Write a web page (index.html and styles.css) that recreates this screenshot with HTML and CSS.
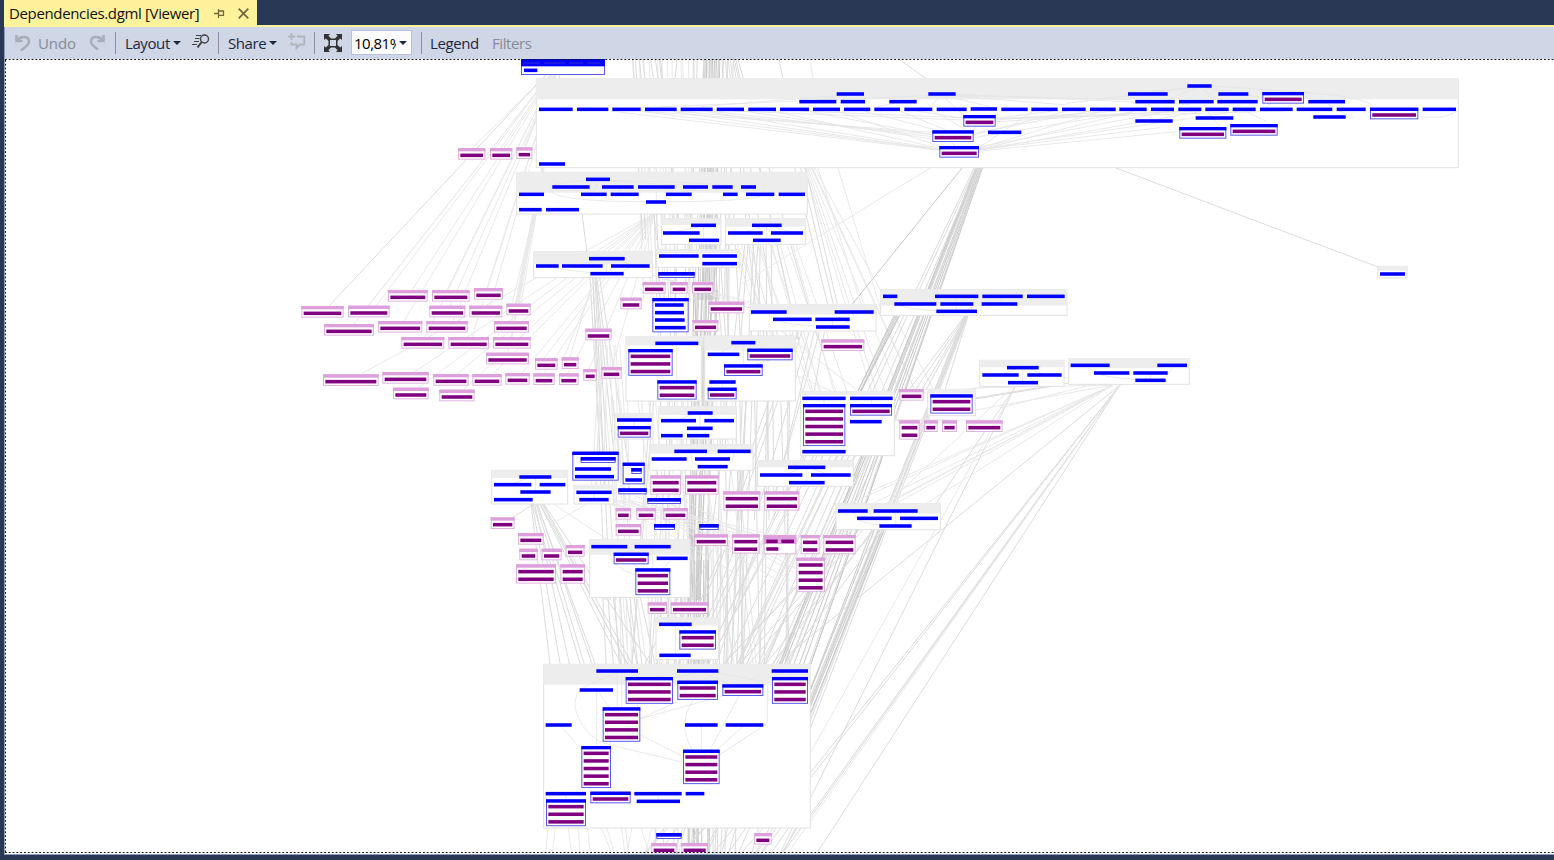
FILE: index.html
```html
<!DOCTYPE html>
<html lang="en">
<head>
<meta charset="utf-8">
<title>Dependencies.dgml [Viewer]</title>
<link rel="stylesheet" href="styles.css">
</head>
<body>
<div class="window">
  <header class="tabs">
    <div class="tab">
      <span class="tab-title">Dependencies.dgml [Viewer]</span>
      <svg class="pin" width="11" height="9" viewBox="0 0 11 9"><path d="M0 4.5H4M4.5 0V9M5 2H9.5V6M5 6.3H10" fill="none" stroke="#75633d" stroke-width="1.3"/></svg>
      <svg class="close" width="11" height="11" viewBox="0 0 11 11"><path d="M.7.7L10.3 10.3M10.3.7L.7 10.3" stroke="#75633d" stroke-width="1.7"/></svg>
    </div>
  </header>
  <nav class="toolbar">
    <svg class="i-undo" width="16" height="18" viewBox="0 0 16 18"><path d="M1.5 1V7H7.5M2 6.5C6 1.5 14 2 14 7.5C14 11 10 13 6 16.5" fill="none" stroke="#a9adb8" stroke-width="2.6"/></svg>
    <span class="t-undo off">Undo</span>
    <svg class="i-redo" width="16" height="18" viewBox="0 0 16 18"><path d="M14.5 1V7H8.5M14 6.5C10 1.5 2 2 2 7.5C2 11 6 13 9 15.5" fill="none" stroke="#a9adb8" stroke-width="2.6"/></svg>
    <i class="sep s1"></i>
    <span class="t-layout">Layout</span><i class="caret"></i>
    <svg class="i-find" width="18" height="15" viewBox="0 0 18 15"><circle cx="12.5" cy="5" r="4" fill="none" stroke="#424242" stroke-width="1.4"/><path d="M9.7 8L5.5 13.5" stroke="#424242" stroke-width="2"/><path d="M4 1.5H9M3 4.5H7.5M2 7.5H7M0 10.5H5" stroke="#424242" stroke-width="1.2"/></svg>
    <i class="sep s2"></i>
    <span class="t-share">Share</span><i class="caret"></i>
    <svg class="i-comment" width="18" height="17" viewBox="0 0 18 17"><path d="M3.5 0V7M0 3.5H7M9 3.5H16.3V11.5H12L8.5 15V11.5H3.5V9" fill="none" stroke="#b1b5c0" stroke-width="1.8"/></svg>
    <i class="sep s3"></i>
    <svg class="i-fit" width="18" height="18" viewBox="0 0 18 18"><path d="M0 0H6L4.4 1.8L7 4.5H11L13.6 1.8L12 0H18V6L16.2 4.4L13.5 7V11L16.2 13.6L18 12V18H12L13.6 16.2L11 13.5H7L4.4 16.2L6 18H0V12L1.8 13.6L4.5 11V7L1.8 4.4L0 6Z" fill="#333"/><rect x="6" y="6" width="6" height="6" fill="#cfd6e5"/></svg>
    <div class="zoom"><span class="zoom-text">10,81%</span><i class="caret"></i></div>
    <i class="sep s4"></i>
    <span class="t-legend">Legend</span>
    <span class="t-filters off">Filters</span>
  </nav>
  <main class="canvas"><svg id="graph" class="graph" width="1549" height="795" viewBox="5 59 1549 795"></svg></main>
</div>
<script src="graph.js"></script>
</body>
</html>
```
FILE: styles.css
```css
* { box-sizing: border-box; }
body { margin: 0; font: 15px/20px "Open Sans", "Noto Sans", sans-serif; color: #1b293e; }
.window { width: 1554px; height: 860px; display: flex; flex-direction: column; background: #293955; padding: 0 0 5px 4px; overflow: hidden; }
.tabs { height: 27px; flex: none; border-bottom: 2px solid #fff29d; }
.tab { width: 253px; height: 27px; background: #fff29d; display: flex; align-items: center; padding: 0 0 1px 5px; color: #111; }
.tab-title { width: 190px; flex: none; white-space: nowrap; font-size: 15px; letter-spacing: -.35px; }
.pin { margin-left: 15px; }
.close { margin-left: 13px; }
.toolbar { height: 32px; flex: none; display: flex; align-items: center; background: #cfd6e5; border-left: 1px solid #8e9bbc; padding-bottom: 1px; white-space: nowrap; }
.toolbar > * { flex: none; }
.off { color: #858b97; }
.i-undo { margin-left: 10px; }
.t-undo { width: 37px; margin-left: 7px; letter-spacing: -.1px; }
.i-redo { margin-left: 14px; }
.sep { width: 1px; height: 22px; background: #8591a2; }
.s1 { margin-left: 10px; }
.t-layout { width: 45px; margin-left: 9px; letter-spacing: -.4px; }
.caret { border: 4px solid transparent; border-top-color: #1b293e; border-bottom: 0; margin-left: 3px; }
.i-find { margin-left: 11px; margin-bottom: 2px; }
.s2 { margin-left: 8px; }
.t-share { width: 38px; margin-left: 9px; letter-spacing: -.4px; }
.i-comment { margin-left: 11px; margin-bottom: 2px; }
.s3 { margin-left: 8px; }
.i-fit { margin-left: 9px; }
.zoom { width: 61px; height: 25px; margin-left: 9px; display: flex; align-items: center; background: #fcfcfc; border: 1px solid #b9c2d8; padding-left: 2px; color: #000; }
.zoom-text { width: 42px; overflow: hidden; letter-spacing: -.5px; }
.s4 { margin-left: 9px; }
.t-legend { width: 49px; margin-left: 8px; letter-spacing: -.4px; }
.t-filters { margin-left: 13px; letter-spacing: -.4px; }
.canvas { flex: 1; min-height: 0; border-left: 1px solid #8e9bbc; border-bottom: 1px solid #8e9bbc; background: #fff; display: flex; }
.graph { display: block; flex: none; }
.group { fill: #fff; stroke: #e1e1e1; stroke-width: 3; }
.group-head { fill: #ededed; }
.edge { fill: none; stroke: #dcdcdc; stroke-width: 1; }
.edge.light { stroke: #e9e9e9; }
.edge.dark { stroke: #c8c8c8; }
.inner { fill: none; stroke: #e5e5e5; stroke-width: 2.5; }
.bar { fill: #00f; }
.bar.method { fill: #800080; }
.blue-box { fill: #fff; stroke: #5a5aea; stroke-width: 3; }
.pink-box { fill: #fff; stroke: #dfb5e0; stroke-width: 3; }
.blue-head { fill: #00f; }
.pink-head { fill: #dda0dd; }
.cell { fill: none; stroke: #1818e0; stroke-width: 8; }
.focus { fill: none; stroke: #111; stroke-width: 1; stroke-dasharray: 1.8 2; }
```
FILE: graph.js
```js
// Node coordinates are in thirds of a pixel, local to the origin of their sector.
// groups: x1 y1 x2 y2 headerBottom | bars: x1 x2 y | boxes: x1 x2 y rows | slots: x1 x2 y
const sectors = [
  { at: [500, 55],
    groups: [[108,70,2876,339,133],[49,351,923,478,413],[483,490,664,569,510],[676,490,917,569,515]],
    inner: ["M1325 120L1130 155M1325 120L1390 180M1325 120L1290 155M1325 120L1470 155M1325 120L1700 150M1050 120L950 136M1010 122L600 155M1285 122L420 158M1325 235L1365 273M1440 190L1420 226",
      "M420 168L1300 232M530 168L1297 238M630 168L1297 245M730 168L1297 252M820 168L1320 280M920 168L1297 240M1010 168L1320 275M430 170L1320 284M330 168L1320 286M700 168L1390 195M900 168L1390 188M1200 168L1340 226M1090 168L1320 228M1250 168L1390 190M1300 168L1400 226M620 170L1318 282M520 170L1318 284",
      "M1437 280L1800 170M1437 284L1900 170M1437 276L2000 170M1437 286L2100 170M1437 284L1980 218M1437 288L2030 230M1437 282L2220 168M1421 240L1700 168M1421 248L1900 170M1487 195L1850 168M1487 200L2040 168M1487 192L2350 168M1487 190L1660 168M1487 190L2200 165M1421 235L1770 168M1437 278L1600 168M1367 118L2070 148M1700 145L2062 100M1367 122L1890 134",
      "M2098 95L2000 136M2098 95L2150 136M2098 95L1900 115M2098 95L2300 130M2135 93L2420 112M2410 112Q2600 125 2620 155M2350 120L2300 155M2230 165L2300 200M2120 165L2160 215M2480 145L2560 190M2760 185Q2850 195 2880 160",
      "M258 376Q130 385 150 408Q180 440 438 440M330 378L560 392M294 380L280 412M330 376Q780 385 780 414M500 440Q700 440 780 425M469 405L469 435M220 402L240 412M360 402L360 412M590 402L540 412M610 516V550M595 518L520 530M800 516V550M780 518L735 530M830 518L870 530"],
    bars: [[1010,1092,117],[1285,1367,117],[898,1009,140],[1022,1095,140],[1168,1250,140],[117,218,163],[231,325,163],[337,422,163],[435,530,163],[542,638,163],[650,732,163],[745,828,163],[840,927,163],[939,1020,163],[1032,1111,163],[1123,1200,163],[1213,1297,163],[1310,1400,163],[1412,1491,162],[117,195,327],[1464,1564,232],
      [258,330,373],[157,269,396],[306,401,396],[414,524,396],[549,624,396],[637,698,396],[723,768,396],[57,132,418],[243,320,418],[332,416,418],[498,575,418],[669,713,418],[738,823,418],[836,915,418],[438,498,441],[57,125,464],[138,237,464],[573,648,511],[489,599,534],[567,657,556],[756,845,511],[684,788,534],[813,909,534],[759,842,556]],
    blue: [[1390,1487,180,1],[1297,1421,226,1],[1318,1437,273,1]],
    pink: [[49,97,277,1],[-30,37,279,1],[-126,-44,279,1]] },
  { at: [980, 60],
    groups: [[1192,618,1282,655,632]],
    bars: [[622,695,78],[444,563,102],[715,805,102],[466,584,125],[597,701,125],[712,833,125],[985,1095,125],[64,143,148],[154,233,148],[246,317,148],[330,407,148],[418,500,148],[513,582,148],[595,664,148],[676,746,148],[758,827,148],[840,938,148],[950,1057,148],[1070,1157,148],[1328,1428,148],[466,578,183],[647,760,174],[1000,1097,171],[1200,1275,642]],
    blue: [[847,972,96,1],[598,739,201,1],[751,893,192,1],[1170,1315,143,1]] },
  { at: [290, 240],
    pink: [[294,413,150,1],[426,539,150,1],[552,639,144,1],[34,161,198,1],[174,299,197,1],[418,526,197,1],[538,637,197,1],[649,722,191,1],[102,252,252,1],[264,397,243,1],[409,533,243,1],[612,717,243,1],[334,463,291,1],[475,597,291,1],[609,722,291,1],[588,717,338,1],[99,266,403,1],[277,416,396,1],[430,536,402,1],[547,635,402,1],[646,719,399,1],[309,416,443,1],[448,554,449,1]] },
  { at: [520, 210],
    groups: [[40,124,398,204,163],[409,118,659,173,130],[317,379,545,574,407],[553,377,827,574,422]],
    inner: ["M260 150V190M240 150L180 165M290 150L340 165M80 172L210 188M330 172L300 188M470 405V511M640 403L600 430M690 403L740 416M670 403V463M750 450L700 465M607 520V533"],
    bars: [[207,314,146],[48,116,168],[126,248,168],[273,389,168],[211,311,191],[417,536,138],[547,651,138],[547,651,161],[406,535,400],[634,706,398],[563,658,433],[568,647,516]],
    blue: [[325,458,417,3],[412,530,511,2],[682,818,416,1],[612,728,463,1],[563,650,533,1]],
    shells: [[397,506,264,103]], shellBars: [[405,491,285],[405,492,308],[405,494,330],[405,497,353]],
    slots: [[415,524,186]],
    pink: [[368,437,216,1],[451,503,216,1],[516,580,216,1],[301,365,263,1],[565,673,275,1],[518,595,330,1],[196,275,356,1],[45,113,444,1],[125,176,442,1],[40,104,490,1],[117,176,490,1],[190,231,477,1],[244,305,471,1]] },
  { at: [740, 280],
    groups: [[27,73,409,154,104],[421,28,982,107,77],[718,240,973,320,262],[985,235,1349,314,265],[181,334,464,528,345],[562,327,707,408,340]],
    inner: ["M88 100Q85 130 228 138M342 100Q345 118 300 138M277 122V138M450 52Q450 85 589 92M649 52V90M710 76L680 90M781 52V68M848 268V305M830 267L790 282M870 267L910 282M1052 260Q1050 290 1186 298M1297 260Q1290 285 1260 298M1231 282V298M252 358V372M394 358V372"],
    bars: [[33,140,96],[284,401,96],[99,215,118],[226,329,118],[228,329,141],[429,472,49],[585,715,49],[727,848,49],[861,974,49],[463,589,72],[601,700,72],[725,832,72],[589,711,94],[801,896,263],[727,836,285],[862,965,285],[804,894,308],[992,1109,256],[1252,1341,256],[1062,1168,279],[1180,1283,279],[1186,1277,301],[187,317,355],[330,458,355],[330,425,425],[187,317,515]],
    blue: [[189,316,372,5],[330,456,372,1],[571,698,343,2]],
    pink: [[244,373,178,1],[478,551,327,1],[478,539,421,2],[552,593,421,1],[606,651,421,1],[678,788,421,1]] },
  { at: [480, 400],
    groups: [[404,40,520,118,56],[535,19,770,118,45],[508,133,820,212,161],[34,210,264,313,234],[281,255,402,313,268],[328,418,631,593,464]],
    inner: ["M463 64V78M660 42V82M640 42L600 58M680 42L715 58M633 158Q630 190 655 197M763 158Q760 190 740 197M166 234V272M145 234L100 250M342 280V296M388 445Q390 500 466 525M454 490L480 505M575 478L550 505M518 444V505"],
    bars: [[411,515,60],[623,698,39],[543,648,62],[673,762,62],[621,698,85],[543,608,107],[621,688,107],[583,681,154],[713,812,154],[515,620,177],[645,750,177],[653,743,200],[118,214,231],[42,154,254],[179,256,254],[121,212,276],[42,158,299],[289,395,277],[298,386,299],[334,442,440],[464,572,440],[530,623,475]],
    blue: [[413,512,78,1],[401,506,458,1],[466,571,505,3]],
    shells: [[277,416,155,87],[428,494,188,65]], shellBars: [[285,393,207],[285,402,230],[436,486,240]],
    slots: [[302,407,171],[454,485,204],[415,500,265],[502,603,294],[522,585,372],[658,716,372]],
    pink: [[511,603,226,2],[615,716,226,2],[730,841,274,2],[407,453,324,1],[469,527,324,1],[550,623,324,1],[407,483,372,1],[32,104,352,1],[114,191,399,1],[118,173,446,1],[185,245,446,1],[257,314,435,1],[108,228,493,2],[241,315,493,2],[643,744,403,1],[756,839,403,2]] },
  { at: [740, 450],
    groups: [[52,31,341,110,52],[287,160,602,240,191]],
    inner: ["M200 56V95M180 56L140 72M220 56L260 72M340 186Q345 220 418 225M466 186V224M530 208L500 224"],
    bars: [[144,256,52],[60,187,75],[213,332,75],[147,254,98],[294,383,183],[401,533,183],[351,455,205],[480,594,205],[418,515,228]],
    pink: [[73,178,124,2],[71,169,255,-2],[182,239,255,2],[250,347,255,2],[169,255,323,4]],
    methods: [[79,113,274],[124,162,274],[79,115,297]] },
  { at: [530, 590],
    groups: [[377,82,566,209,106],[40,222,842,715,284]],
    inner: ["M436 107V192M450 107L470 121M262 247L180 282Q120 310 140 370Q170 450 240 465L460 517M262 247V350M275 247V350M200 303V468M205 305L237 352M92 408L155 480M500 247L440 263M520 247L600 283M440 250L370 262M490 330Q440 400 487 480M627 318L540 480M640 408L560 480M514 408V480M712 285V400L570 494M560 250Q710 270 712 290M332 385L442 335M332 386L577 318M332 435L460 500M240 455V468M320 342L325 352M780 247V261M108 615V628M385 615V630"],
    bars: [[387,485,103],[388,482,196],[199,324,243],[441,565,243],[725,834,243],[149,249,300],[47,125,405],[465,563,405],[587,700,405],[47,168,611],[313,455,611],[467,523,611],[320,450,634]],
    blue: [[448,558,121,2],[287,429,261,3],[442,564,272,2],[577,700,283,1],[726,834,261,3],[218,331,352,4],[154,243,468,5],[459,569,479,4],[48,168,628,3],[181,302,605,1]],
    slots: [[379,455,729]],
    pink: [[353,411,37,1],[422,535,37,1],[672,725,729,1],[364,440,759,1],[454,534,759,1]] },
];

let edges = "";
const line = (x1, y1, x2, y2, tone = "") => { edges += `<path class="edge ${tone}" d="M${x1} ${y1}L${x2} ${y2}"/>`; };
const fan = (x, y, targets, tone) => targets.forEach(([tx, ty]) => line(x, y, tx, ty, tone));
let seed = 7;
const rnd = () => (seed = (seed * 16807) % 2147483647) / 2147483647;
// A bundle of n roughly parallel links between two horizontal spans.
const bundle = (n, a1, a2, ya, b1, b2, yb, tone) => {
  for (let i = 0; i < n; i++) {
    const t = (i + rnd()) / n, u = Math.min(1, Math.max(0, t + (rnd() - .5) * .25));
    line((a1 + (a2 - a1) * t).toFixed(1), ya, (b1 + (b2 - b1) * u).toFixed(1), yb, tone);
  }
};

fan(560, 62, [[354,324],[368,306],[376,306],[404,321],[412,290],[447,290],[425,337],[450,306],[453,321],[487,288],[490,306],[472,337],[472,148],[501,148],[525,148]], "light");
line(558, 62, 329, 306);
fan(562, 62, [[519,304],[521,304],[512,321],[512,337],[508,353],[516,304],[524,145]], "light");
fan(655, 213, [[361,374],[414,372],[457,374],[418,388],[463,390],[493,374],[522,373],[544,358],[544,373],[568,373],[589,369],[612,367]], "light");
bundle(5, 590, 600, 277, 598, 632, 480); bundle(3, 592, 597, 277, 600, 619, 600);
line(582, 214, 587, 252); line(597, 277, 564, 357, "light"); line(594, 277, 570, 357, "light");
line(536, 214, 516, 304, "light"); line(534, 214, 512, 304, "light");
bundle(14, 703, 721, 59, 698, 716, 300, "dark");
bundle(10, 691, 735, 59, 686, 732, 300);
bundle(12, 628, 700, 59, 640, 700, 300, "light");
bundle(8, 628, 665, 59, 640, 690, 240);
bundle(8, 722, 740, 59, 728, 820, 340);
bundle(12, 650, 730, 214, 645, 740, 400);
bundle(13, 692, 718, 290, 685, 705, 600, "dark");
bundle(18, 650, 745, 340, 632, 745, 664);
bundle(20, 600, 735, 400, 620, 760, 664, "light");
bundle(8, 598, 620, 345, 590, 630, 500, "light");
bundle(16, 655, 745, 540, 650, 735, 860);
bundle(9, 687, 710, 560, 685, 710, 860, "dark");
bundle(12, 730, 800, 245, 780, 850, 400, "light");
bundle(7, 740, 775, 245, 700, 790, 520);
bundle(7, 800, 808, 155, 865, 940, 400, "light");
bundle(3, 790, 807, 168, 825, 838, 307);
bundle(8, 740, 795, 400, 735, 800, 664);
bundle(14, 800, 880, 455, 700, 780, 664);
bundle(7, 790, 830, 332, 730, 800, 500);
bundle(12, 530, 545, 504, 550, 650, 664);
line(532, 505, 512, 518); line(585, 505, 550, 525, "light"); line(555, 505, 620, 548, "light");
bundle(6, 590, 630, 500, 700, 780, 535, "light");
bundle(6, 590, 690, 496, 740, 850, 580, "light");
bundle(9, 600, 640, 590, 598, 655, 664);
bundle(8, 700, 760, 550, 645, 720, 664);
bundle(9, 975, 983, 168, 760, 804, 700, "dark");
bundle(7, 974, 982, 168, 725, 800, 690);
line(962, 168, 850, 307, "dark"); line(930, 168, 740, 285, "light"); line(818, 168, 862, 307, "light"); line(838, 168, 880, 307, "light");
bundle(5, 964, 968, 316, 900, 945, 390); bundle(7, 964, 968, 316, 796, 811, 728);
bundle(5, 893, 900, 316, 857, 862, 391, "dark");
bundle(5, 870, 885, 530, 800, 811, 712, "dark");
bundle(7, 845, 885, 530, 715, 790, 664);
line(1116, 168, 1378, 267); line(896, 57, 928, 80);
line(779, 60, 783, 79); line(677, 60, 675, 79); line(810, 60, 813, 79, "light");
fan(1113, 385, [[869,492],[885,505],[840,508],[870,505],[820,545],[835,530],[790,590],[975,388],[965,412]], "light");
fan(1120, 385, [[811,772],[811,777],[811,817],[783,853],[817,853],[779,662]]);
line(1120, 385, 788, 853, "light");
line(1090, 385, 1000, 408, "light"); line(985, 378, 1075, 378, "light"); line(975, 398, 1068, 383); line(975, 399, 1060, 385);
line(1015, 387, 811, 797); line(1015, 387, 811, 752, "light"); line(1015, 387, 935, 505); line(1013, 387, 880, 510, "light");
line(990, 387, 900, 395, "light"); line(811, 797, 783, 853);
bundle(12, 545, 660, 828, 545, 660, 860, "light"); bundle(16, 660, 760, 828, 640, 750, 860); bundle(8, 760, 800, 828, 735, 780, 860);
fan(895, 420, [[740,350],[780,330],[906,390],[906,425],[931,420],[948,420],[985,420]], "light");
fan(662, 278, [[750,308],[735,300],[815,320],[600,260]], "light");

const head = (cls, x1, x2, y, h = 10) => `<rect class="${cls}-head" x="${x1}" y="${y}" width="${x2 - x1}" height="${h}"/>`;
const box = (cls, x1, x2, y, h) => `<rect class="${cls}-box" x="${x1 + 1.5}" y="${y + 1.5}" width="${x2 - x1 - 3}" height="${h - 3}"/>`;
const bar = (x1, x2, y, cls = "") => `<rect class="bar ${cls}" x="${x1}" y="${y - 5.3}" width="${x2 - x1}" height="10.6"/>`;
const stack = (cls, [x1, x2, y, rows]) => {
  if (rows < 0) return box(cls, x1, x2, y, 58) + head(cls, x1, x2, y, 27);
  let s = box(cls, x1, x2, y, 35 + 22.8 * (rows - 1)) + head(cls, x1, x2, y);
  for (let i = 0; i < rows; i++) s += bar(x1 + 7, x2 - 7, y + 22 + 22.8 * i, "method");
  return s;
};
let nodes = "";
for (const s of sectors) {
  nodes += `<g transform="translate(${s.at}) scale(.33333)">`;
  for (const [x1, y1, x2, y2, hb] of s.groups || [])
    nodes += `<rect class="group" x="${x1 + 1}" y="${y1 + 1}" width="${x2 - x1 - 2}" height="${y2 - y1 - 2}"/><rect class="group-head" x="${x1}" y="${y1}" width="${x2 - x1}" height="${hb - y1}"/>`;
  for (const d of s.inner || []) nodes += `<path class="inner" d="${d}"/>`;
  for (const b of s.bars || []) nodes += bar(...b);
  for (const b of s.blue || []) nodes += stack("blue", b);
  for (const b of s.pink || []) nodes += stack("pink", b);
  for (const [x1, x2, y, h] of s.shells || []) nodes += box("blue", x1, x2, y, h) + head("blue", x1, x2, y);
  for (const b of s.shellBars || []) nodes += bar(...b);
  for (const [x1, x2, y] of s.slots || []) nodes += box("blue", x1, x2, y, 18) + head("blue", x1, x2, y, 11);
  for (const [x1, x2, y] of s.methods || []) nodes += bar(x1, x2, y, "method");
  nodes += "</g>";
}
nodes += `<g transform="translate(500 55) scale(.33333)">${box("blue", 63, 315, 0, 60)}${head("blue", 63, 315, 0, 34)}${bar(72, 112, 46)}<path class="cell" d="M70 24H120M132 24H196M208 24H250M262 24H300"/></g>`;
document.getElementById("graph").innerHTML = edges + nodes +
  '<path class="focus" d="M5 59.5H1554M5 852.5H1554M5.5 60V853"/>';
```
